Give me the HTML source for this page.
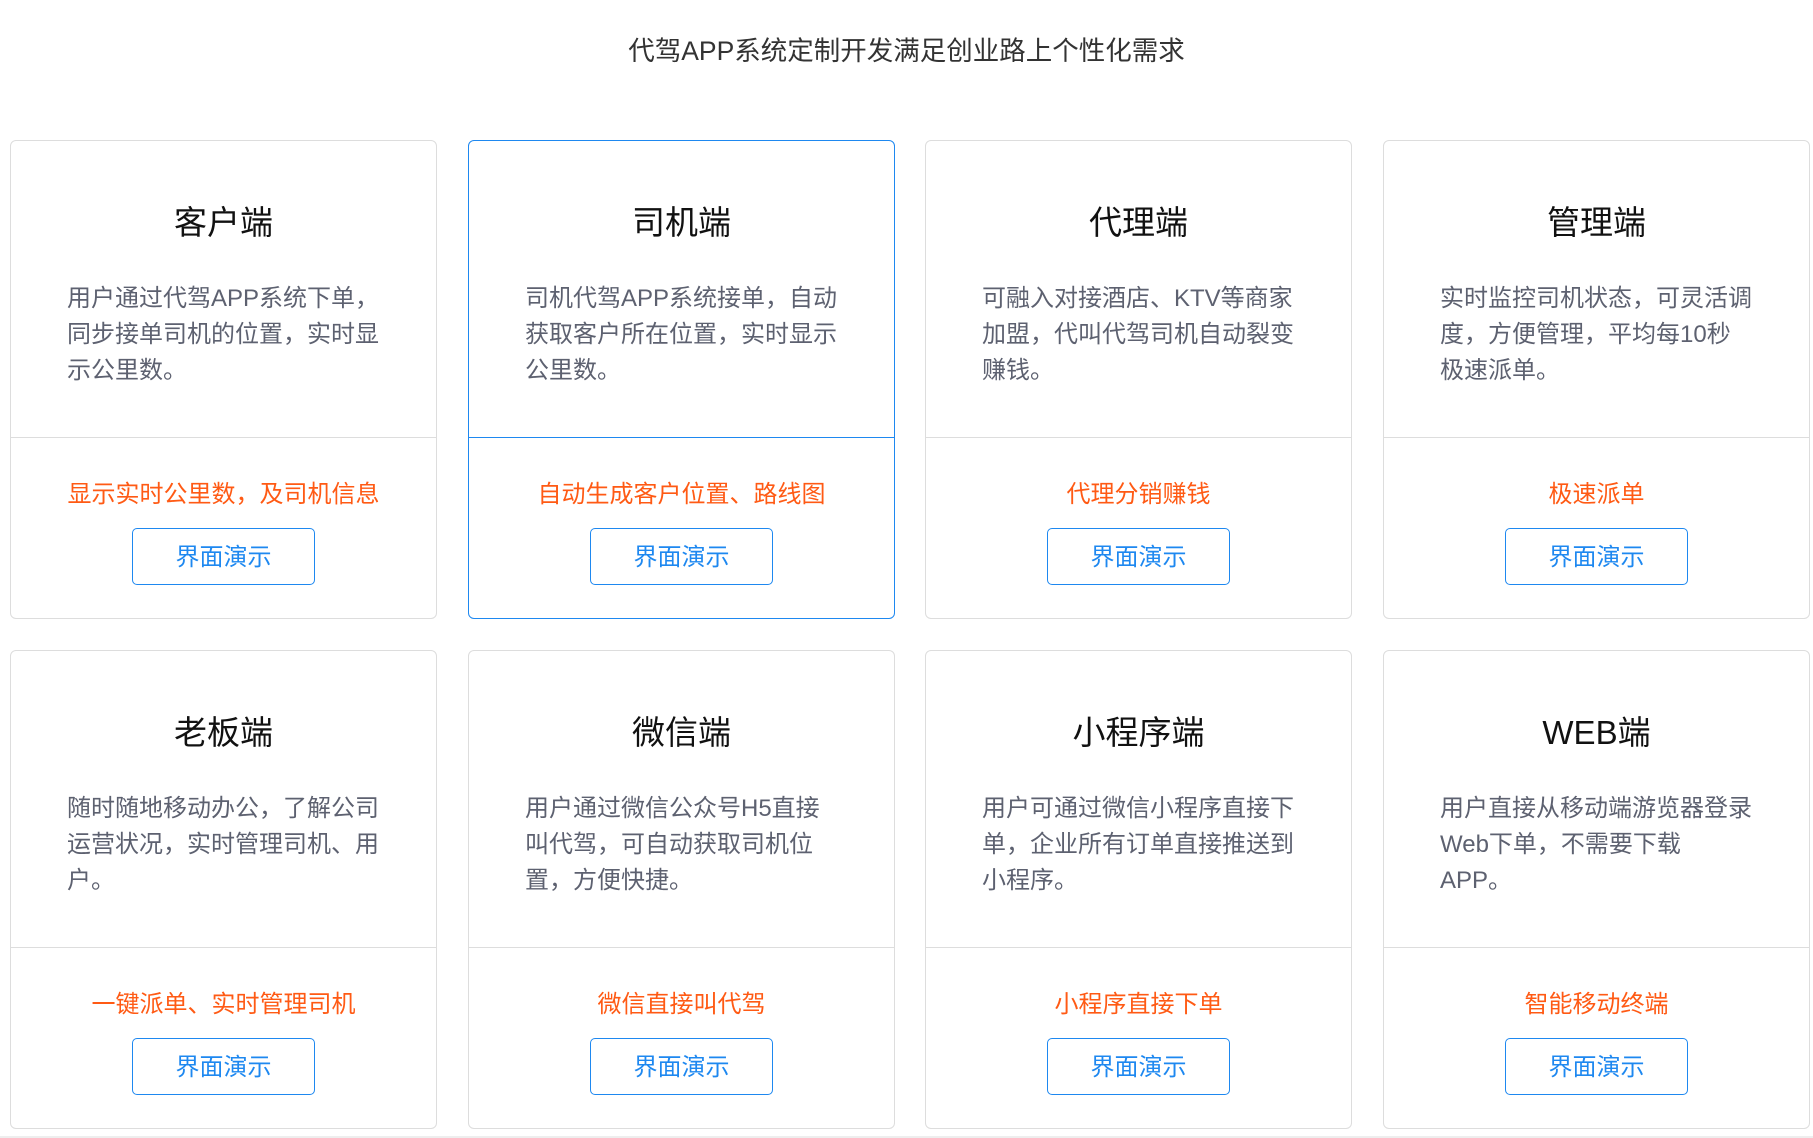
<!DOCTYPE html>
<html><head><meta charset="utf-8"><style>
*{margin:0;padding:0;box-sizing:border-box}
body{width:1813px;height:1138px;background:#fff;font-family:"Liberation Sans","Noto Sans CJK SC",sans-serif;position:relative;overflow:hidden}
h1{position:absolute;top:29px;left:0;width:1813px;text-align:center;font-size:26.5px;font-weight:normal;color:#333}
.card{position:absolute;width:427px;height:479px;border:1px solid #ddd;border-radius:6px;background:#fff}
.card.a{border-color:#1e88f0}
.card .t{position:absolute;top:62px;left:0;width:100%;text-align:center;font-size:33px;color:#111;line-height:40px}
.card .d{position:absolute;top:140px;left:56px;width:316px;font-size:24px;line-height:36px;color:#5d6170}
.card .line{position:absolute;top:296px;left:0;width:100%;height:1px;background:#ddd}
.card.a .line{background:#1e88f0}
.card .o{position:absolute;top:336px;left:0;width:100%;text-align:center;font-size:24px;color:#ff5a14;line-height:36px}
.card .b{position:absolute;top:387px;left:121px;width:183px;height:57px;border:1.5px solid #1e88f0;border-radius:5px;text-align:center;line-height:58px;font-size:24px;color:#1e88f0}
</style></head><body>
<h1>代驾APP系统定制开发满足创业路上个性化需求</h1>

<div class="card" style="left:10px;top:140px"><div class="t">客户端</div><div class="d">用户通过代驾APP系统下单，同步接单司机的位置，实时显示公里数。</div><div class="line"></div><div class="o">显示实时公里数，及司机信息</div><div class="b">界面演示</div></div>
<div class="card a" style="left:468px;top:140px"><div class="t">司机端</div><div class="d">司机代驾APP系统接单，自动获取客户所在位置，实时显示公里数。</div><div class="line"></div><div class="o">自动生成客户位置、路线图</div><div class="b">界面演示</div></div>
<div class="card" style="left:925px;top:140px"><div class="t">代理端</div><div class="d">可融入对接酒店、KTV等商家加盟，代叫代驾司机自动裂变赚钱。</div><div class="line"></div><div class="o">代理分销赚钱</div><div class="b">界面演示</div></div>
<div class="card" style="left:1383px;top:140px"><div class="t">管理端</div><div class="d">实时监控司机状态，可灵活调度，方便管理，平均每10秒<br>极速派单。</div><div class="line"></div><div class="o">极速派单</div><div class="b">界面演示</div></div>

<div class="card" style="left:10px;top:650px"><div class="t">老板端</div><div class="d">随时随地移动办公，了解公司运营状况，实时管理司机、用户。</div><div class="line"></div><div class="o">一键派单、实时管理司机</div><div class="b">界面演示</div></div>
<div class="card" style="left:468px;top:650px"><div class="t">微信端</div><div class="d">用户通过微信公众号H5直接<br>叫代驾，可自动获取司机位置，方便快捷。</div><div class="line"></div><div class="o">微信直接叫代驾</div><div class="b">界面演示</div></div>
<div class="card" style="left:925px;top:650px"><div class="t">小程序端</div><div class="d">用户可通过微信小程序直接下单，企业所有订单直接推送到小程序。</div><div class="line"></div><div class="o">小程序直接下单</div><div class="b">界面演示</div></div>
<div class="card" style="left:1383px;top:650px"><div class="t">WEB端</div><div class="d">用户直接从移动端游览器登录Web下单，不需要下载<br>APP。</div><div class="line"></div><div class="o">智能移动终端</div><div class="b">界面演示</div></div>
<div style="position:absolute;left:0;top:1136px;width:1813px;height:2px;background:#eee"></div>
</body></html>
